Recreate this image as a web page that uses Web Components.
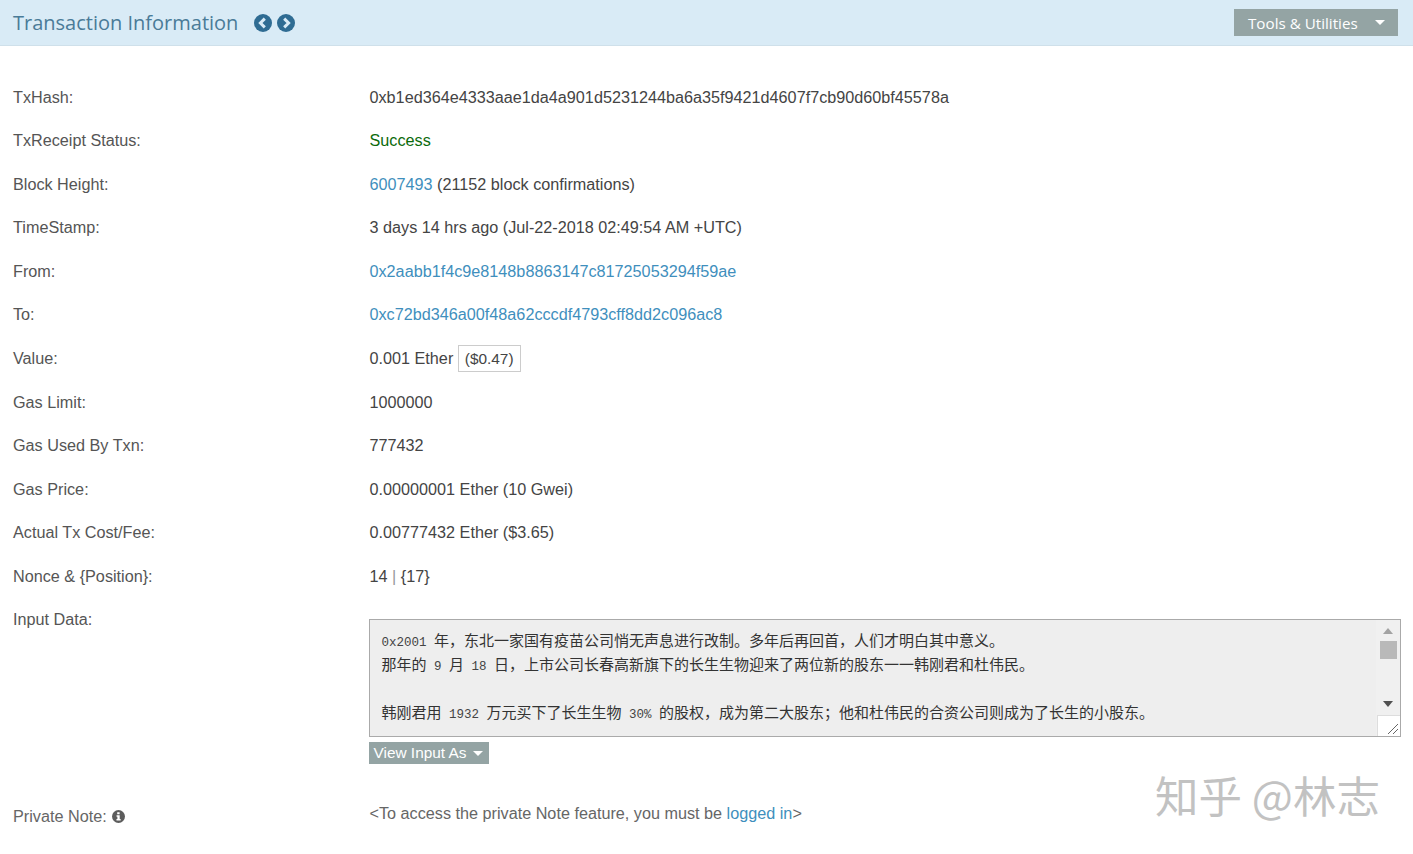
<!DOCTYPE html>
<html lang="zh">
<head>
<meta charset="utf-8">
<title>Transaction Information</title>
<style>
  html, body { margin: 0; background: #fff; }
</style>
</head>
<body>
<tx-page></tx-page>

<script>
class TxHeader extends HTMLElement {
  constructor() {
    super();
    this.root = this.attachShadow({mode: 'open'});
    this.root.innerHTML = `
      <style>
        :host { display: flex; align-items: center; justify-content: space-between; height: 45px; padding: 0 15px 0 13px; background: #d9ebf6; border-bottom: 1px solid #cfe0ea; font-family: "Open Sans", sans-serif; }
        .left { display: flex; align-items: center; }
        h1 { margin: 0; font-size: 20px; font-weight: 400; color: #4a7b98; }
        .nav { display: flex; gap: 5px; margin-left: 16px; }
        svg { display: block; }
        .btn { display: flex; align-items: center; justify-content: space-between; box-sizing: border-box; width: 164px; height: 27px; padding: 0 13px 0 14px; background: #94a4a4; color: #fff; font-size: 15.2px; }
        .caret { width: 0; height: 0; border: 5px solid transparent; border-top: 5px solid #fff; border-bottom: 0; }
      </style>
      <div class="left">
        <h1>Transaction Information</h1>
        <div class="nav">
          <svg width="18" height="18" viewBox="0 0 18 18"><circle cx="9" cy="9" r="9" fill="#2f6c93"/><path d="M10.8 4.6 6.4 9l4.4 4.4" fill="none" stroke="#d9ebf6" stroke-width="3"/></svg>
          <svg width="18" height="18" viewBox="0 0 18 18"><circle cx="9" cy="9" r="9" fill="#2f6c93"/><path d="M7.2 4.6 11.6 9l-4.4 4.4" fill="none" stroke="#d9ebf6" stroke-width="3"/></svg>
        </div>
      </div>
      <div class="btn"><span>Tools &amp; Utilities</span><span class="caret"></span></div>`;
  }
}
customElements.define('tx-header', TxHeader);

class TxRow extends HTMLElement {
  constructor() {
    super();
    this.root = this.attachShadow({mode: 'open'});
    this.root.innerHTML = `
      <style>
        :host { display: grid; grid-template-columns: 356.5px 1fr; height: 43.55px; padding-left: 13px; line-height: 20px; }
        :host([tall]) { height: auto; }
        .label { color: #555; }
      </style>
      <div class="label"><slot name="label"></slot></div>
      <div><slot></slot></div>`;
  }
}
customElements.define('tx-row', TxRow);

class InputData extends HTMLElement {
  constructor() {
    super();
    this.root = this.attachShadow({mode: 'open'});
    this.root.innerHTML = `
      <style>
        :host { display: block; margin: 10px 12px 0 -1px; }
        .box { position: relative; box-sizing: border-box; height: 118px; padding: 8px 30px 0 12px; background: #eee; border: 1px solid #aaa; font-family: "Noto Sans CJK SC", sans-serif; font-size: 15px; line-height: 24px; color: #333; overflow: hidden; white-space: nowrap; }
        .bar { position: absolute; top: 0; right: 0; bottom: 0; width: 24px; background: #f0f0f0; }
        .up, .down { position: absolute; right: 7px; width: 0; height: 0; border: 5px solid transparent; border-top-width: 0; border-bottom-width: 6px; }
        .up { top: 8px; border-bottom-color: #a3a3a3; }
        .down { top: 81px; border-width: 6px 5px 0; border-top-color: #505050; }
        .thumb { position: absolute; top: 21px; right: 3px; width: 17px; height: 18px; background: #b9b9b9; }
        .grip { position: absolute; right: 0; bottom: 0; width: 22px; height: 20px; background: #fff; border-left: 1px solid #ddd; border-top: 1px solid #ddd; }
        .grip svg { position: absolute; right: 1px; bottom: 1px; }
        .view { display: flex; align-items: center; box-sizing: border-box; width: 120px; height: 22px; margin-top: 5px; padding: 0 3px 0 5px; background: #94a4a4; color: #fff; font-family: "Liberation Sans", sans-serif; font-size: 15.4px; }
        .caret { width: 0; height: 0; margin-left: auto; margin-right: 3px; border: 5px solid transparent; border-top: 5px solid #fff; border-bottom: 0; }
      </style>
      <div class="box">
        <slot></slot>
        <div class="bar">
          <div class="up"></div>
          <div class="thumb"></div>
          <div class="down"></div>
        </div>
        <div class="grip"><svg width="12" height="12" viewBox="0 0 12 12"><path d="M1 11 11 1M6 11l5-5" stroke="#666" stroke-width="1"/></svg></div>
      </div>
      <div class="view"><span>View Input As</span><span class="caret"></span></div>`;
  }
}
customElements.define('input-data', InputData);

class TxPage extends HTMLElement {
  constructor() {
    super();
    this.root = this.attachShadow({mode: 'open'});
    this.root.innerHTML = `
      <style>
        :host { display: block; position: relative; height: 854px; overflow: hidden; font-family: "Liberation Sans", Arial, sans-serif; font-size: 16.22px; color: #444; }
        main { display: block; padding-top: 40.7px; }
        a { color: #3f8fbd; text-decoration: none; }
        .ok { color: #0b6a0b; }
        .usd { display: inline-block; margin: -4.5px 0 -4.5px 0; padding: 0 6px; border: 1px solid #ccc; line-height: 25px; font-size: 15.4px; }
        .m { font-family: "Liberation Mono", monospace; font-size: 12.5px; line-height: 1; white-space: pre; color: #444; }
        .sep { color: #999; }
        .note { margin-top: 39px; color: #666; }
        .nl { display: inline-block; margin-top: 3px; color: #666; }
        .nl svg { vertical-align: -1px; margin-left: 1px; }
        .wm { position: absolute; left: 1155px; top: 765px; font-family: "Noto Sans CJK SC", sans-serif; font-size: 43.5px; line-height: 60px; color: #c2c2c2; white-space: nowrap; }
      </style>
      <tx-header></tx-header>
      <main>
        <tx-row><span slot="label">TxHash:</span>0xb1ed364e4333aae1da4a901d5231244ba6a35f9421d4607f7cb90d60bf45578a</tx-row>
        <tx-row><span slot="label">TxReceipt Status:</span><span class="ok">Success</span></tx-row>
        <tx-row><span slot="label">Block Height:</span><a href="#">6007493</a> (21152 block confirmations)</tx-row>
        <tx-row><span slot="label">TimeStamp:</span>3 days 14 hrs ago (Jul-22-2018 02:49:54 AM +UTC)</tx-row>
        <tx-row><span slot="label">From:</span><a href="#">0x2aabb1f4c9e8148b8863147c81725053294f59ae</a></tx-row>
        <tx-row><span slot="label">To:</span><a href="#">0xc72bd346a00f48a62cccdf4793cff8dd2c096ac8</a></tx-row>
        <tx-row><span slot="label">Value:</span>0.001 Ether <span class="usd">($0.47)</span></tx-row>
        <tx-row><span slot="label">Gas Limit:</span>1000000</tx-row>
        <tx-row><span slot="label">Gas Used By Txn:</span>777432</tx-row>
        <tx-row><span slot="label">Gas Price:</span>0.00000001 Ether (10 Gwei)</tx-row>
        <tx-row><span slot="label">Actual Tx Cost/Fee:</span>0.00777432 Ether ($3.65)</tx-row>
        <tx-row><span slot="label">Nonce &amp; {Position}:</span>14 <span class="sep">|</span> {17}</tx-row>
        <tx-row tall><span slot="label">Input Data:</span>
          <input-data><span class="m">0x2001 </span>年，东北一家国有疫苗公司悄无声息进行改制。多年后再回首，人们才明白其中意义。<br>那年的<span class="m"> 9 </span>月<span class="m"> 18 </span>日，上市公司长春高新旗下的长生生物迎来了两位新的股东一一韩刚君和杜伟民。<br><br>韩刚君用<span class="m"> 1932 </span>万元买下了长生生物<span class="m"> 30% </span>的股权，成为第二大股东；他和杜伟民的合资公司则成为了长生的小股东。</input-data>
        </tx-row>
        <tx-row class="note"><span slot="label" class="nl">Private Note: <svg width="13" height="13" viewBox="0 0 14 14"><circle cx="7" cy="7" r="7" fill="#5c5c5c"/><path d="M5.6 2.4h2.6v2.2H5.6zM4.9 5.6h3.4v4.1h1v1.7H4.8V9.7h1V7.3h-.9z" fill="#fff"/></svg></span>&lt;To access the private Note feature, you must be <a href="#">logged in</a>&gt;</tx-row>
      </main>
      <div class="wm">知乎 @林志</div>`;
  }
}
customElements.define('tx-page', TxPage);
</script>
</body>
</html>
